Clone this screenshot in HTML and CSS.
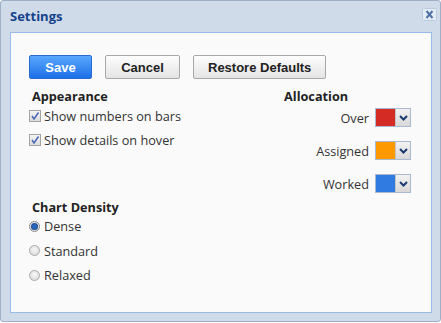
FILE: index.html
```html
<!DOCTYPE html>
<html>
<head>
<meta charset="utf-8">
<link rel="stylesheet" href="styles.css">
</head>
<body>
<div class="window">
  <div class="header">
    <span class="title">Settings</span>
    <span class="close">
      <svg width="15" height="13" viewBox="0 0 15 13">
        <rect x="0.5" y="0.5" width="14" height="12" rx="1" fill="#e4ecf6" stroke="#bccbdd"/>
        <path d="M4.5 3 L10.5 10 M10.5 3 L4.5 10" stroke="#4f72a6" stroke-width="2"/>
      </svg>
    </span>
  </div>
  <div class="panel">
    <div class="buttons">
      <button class="btn btn-primary">Save</button>
      <button class="btn btn-cancel">Cancel</button>
      <button class="btn">Restore Defaults</button>
    </div>
    <div class="columns">
      <div class="col-left">
        <div class="heading">Appearance</div>
        <div class="options">
          <label class="option"><span class="check"><svg width="12" height="12" viewBox="0 0 12 12"><defs><linearGradient id="cg" x1="0" y1="0" x2="0" y2="1"><stop offset="0" stop-color="#f6f6f6"/><stop offset="1" stop-color="#dadada"/></linearGradient></defs><rect x="0.5" y="0.5" width="11" height="11" fill="url(#cg)" stroke="#a4a4a4"/><path d="M3 6 L5 9 L9.5 2.5" fill="none" stroke="#4a67b8" stroke-width="1.5"/></svg></span>Show numbers on bars</label>
          <label class="option"><span class="check"><svg width="12" height="12" viewBox="0 0 12 12"><rect x="0.5" y="0.5" width="11" height="11" fill="url(#cg)" stroke="#a4a4a4"/><path d="M3 6 L5 9 L9.5 2.5" fill="none" stroke="#4a67b8" stroke-width="1.5"/></svg></span>Show details on hover</label>
        </div>
        <div class="heading heading-density">Chart Density</div>
        <div class="options radios">
          <label class="option"><span class="radio radio-on"></span>Dense</label>
          <label class="option"><span class="radio"></span>Standard</label>
          <label class="option"><span class="radio"></span>Relaxed</label>
        </div>
      </div>
      <div class="col-right">
        <div class="heading">Allocation</div>
        <div class="pickers">
          <div class="picker-row">Over<span class="picker"><span class="swatch swatch-red"></span><span class="arrow"><svg width="9" height="6" viewBox="0 0 9 6"><path d="M1 1 L4.5 4.5 L8 1" fill="none" stroke="#1b3b70" stroke-width="2"/></svg></span></span></div>
          <div class="picker-row">Assigned<span class="picker"><span class="swatch swatch-orange"></span><span class="arrow"><svg width="9" height="6" viewBox="0 0 9 6"><path d="M1 1 L4.5 4.5 L8 1" fill="none" stroke="#1b3b70" stroke-width="2"/></svg></span></span></div>
          <div class="picker-row">Worked<span class="picker"><span class="swatch swatch-blue"></span><span class="arrow"><svg width="9" height="6" viewBox="0 0 9 6"><path d="M1 1 L4.5 4.5 L8 1" fill="none" stroke="#1b3b70" stroke-width="2"/></svg></span></span></div>
        </div>
      </div>
    </div>
  </div>
</div>
</body>
</html>
```
FILE: styles.css
```css
* { box-sizing: border-box; }
html, body { margin: 0; padding: 0; background: #ffffff; }
body { font-family: "Open Sans", "Noto Sans", sans-serif; font-size: 12.7px; color: #333; }

.window {
  width: 441px;
  height: 322px;
  background: #cfdbe9;
  border: 1px solid #9fb0c6;
  border-radius: 3px;
  display: flex;
  flex-direction: column;
  padding: 0 8px 8px 9px;
}

.header {
  height: 31px;
  display: flex;
  align-items: flex-start;
  justify-content: space-between;
  padding-top: 6px;
}
.title {
  font-weight: bold;
  color: #15428b;
  line-height: 18px;
  font-size: 13px;
}
.close { display: flex; margin-top: 1px; margin-right: -5px; }

.panel {
  flex: 1;
  background: #fafafa;
  border: 1px solid #99bbe8;
  padding: 22px 20px 0 18px;
}

.buttons { display: flex; gap: 13px; }
.btn {
  height: 24px;
  padding: 0 14px;
  font-family: "Liberation Sans", Arial, sans-serif;
  font-weight: bold;
  font-size: 13px;
  color: #222;
  background: linear-gradient(#fdfdfd, #e4e4e4);
  border: 1px solid #a8a8a8;
  border-radius: 2px;
}
.btn-primary {
  width: 63px;
  color: #fff;
  background: linear-gradient(#5aa8ff, #1c70e6);
  border-color: #2b6bd2;
}
.btn-cancel { min-width: 75px; }

.columns {
  display: flex;
  justify-content: space-between;
  margin-top: 8px;
}
.col-left { display: flex; flex-direction: column; }
.col-right { width: 130px; display: flex; flex-direction: column; }

.heading {
  font-weight: bold;
  color: #222;
  line-height: 18px;
  padding-left: 3px;
}
.heading-density { margin-top: 49px; }

.options { display: flex; flex-direction: column; gap: 6px; margin-top: 2px; }
.radios { margin-top: 1px; gap: 6.5px; }
.option {
  display: flex;
  align-items: center;
  height: 18px;
  line-height: 18px;
  color: #333;
}
.check { display: flex; width: 15px; }

.radio {
  width: 11px;
  height: 11px;
  border-radius: 50%;
  border: 1px solid #a9a9a9;
  background: radial-gradient(circle at 50% 40%, #f8f8f8, #d4d4d4);
  margin-right: 4px;
  display: flex;
  align-items: center;
  justify-content: center;
}
.radio-on { border-color: #8a8a8a; }
.radio-on::after {
  content: "";
  width: 5px;
  height: 5px;
  border-radius: 50%;
  background: #2a66b8;
  box-shadow: 0 0 0 1px #1c4f94;
}

.pickers {
  display: flex;
  flex-direction: column;
  align-items: flex-end;
  gap: 14px;
  margin-top: 3px;
}
.picker-row {
  display: flex;
  align-items: center;
  gap: 6px;
  color: #333;
  line-height: 18px;
}
.picker {
  display: flex;
  height: 19px;
  border: 1px solid #a9b9d2;
}
.swatch { width: 19px; }
.swatch-red { background: #d42b25; }
.swatch-orange { background: #ff9900; }
.swatch-blue { background: #2f7be2; }
.arrow {
  width: 15px;
  background: linear-gradient(#f2f2f2, #d8d8d8);
  border-left: 1px solid #c4c4c4;
  display: flex;
  align-items: center;
  justify-content: center;
}
```
